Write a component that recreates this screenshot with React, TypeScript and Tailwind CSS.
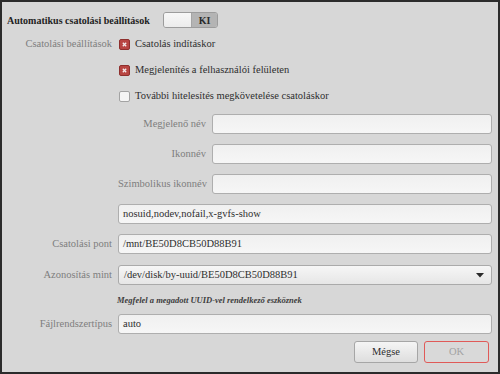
const Checkbox = ({ checked }: { checked: boolean }) =>
  checked ? (
    <span className="flex h-[11px] w-[11px] items-center justify-center rounded-[2px] border border-[#8e2f2d] bg-[#b84542]">
      <svg width="5" height="5" viewBox="0 0 5 5">
        <path d="M0.8 0.8 L4.2 4.2 M4.2 0.8 L0.8 4.2" stroke="#f4eaea" strokeWidth="1.3" />
      </svg>
    </span>
  ) : (
    <span className="h-[11px] w-[11px] rounded-[2px] border border-[#a3a3a3] bg-[#f5f5f5]" />
  );

const Field = ({ value = "" }: { value?: string }) => (
  <div className="flex h-[20px] flex-1 items-center rounded-[3px] border border-[#aeaeae] bg-gradient-to-b from-[#f0f0f0] to-[#f6f6f6] px-[4px] text-[10.5px] text-[#2e2e2e]">
    {value}
  </div>
);

export default function App() {
  return (
    <div className="flex h-[374px] w-[500px] flex-col border-2 border-[#2b2b2b] bg-[#d7d7d7] pt-[10px] font-['Liberation_Serif','Times_New_Roman',serif] text-[#2e2e2e]">
      {/* header */}
      <div className="flex h-[16px] items-center pl-[5px]">
        <span className="w-[156px] text-[10px] font-bold text-[#222]">Automatikus csatolási beállítások</span>
        <div className="flex h-[16px] w-[55px] overflow-hidden rounded-[3px] border border-[#9c9c9c]">
          <div className="w-[27px] bg-gradient-to-b from-[#f7f7f7] to-[#ececec]" />
          <div className="flex flex-1 items-center justify-center border-l border-[#a5a5a5] bg-[#b4b4b4] text-[10px] font-bold text-[#2a2a2a]">
            KI
          </div>
        </div>
      </div>

      {/* checkbox rows */}
      <div className="mt-[8px] flex h-[16px] items-center gap-[6px]">
        <span className="w-[110px] text-right text-[10.5px] text-[#7e7e7e]">Csatolási beállítások</span>
        <div className="ml-[1px] flex items-center gap-[5px]">
          <Checkbox checked />
          <span className="text-[10.5px]">Csatolás indításkor</span>
        </div>
      </div>
      <div className="mt-[10px] flex h-[16px] items-center gap-[6px]">
        <span className="w-[110px]" />
        <div className="ml-[1px] flex items-center gap-[5px]">
          <Checkbox checked />
          <span className="text-[10.5px]">Megjelenítés a felhasználói felületen</span>
        </div>
      </div>
      <div className="mt-[10px] flex h-[16px] items-center gap-[6px]">
        <span className="w-[110px]" />
        <div className="ml-[1px] flex items-center gap-[5px]">
          <Checkbox checked={false} />
          <span className="text-[10.5px]">További hitelesítés megkövetelése csatoláskor</span>
        </div>
      </div>

      {/* nested fields */}
      <div className="mt-[10px] flex flex-col gap-[10px] pl-[116px] pr-[6px]">
        {["Megjelenő név", "Ikonnév", "Szimbolikus ikonnév"].map((l) => (
          <div key={l} className="flex items-center gap-[6px]">
            <span className="w-[88px] whitespace-nowrap text-right text-[10.5px] text-[#7e7e7e]">{l}</span>
            <Field />
          </div>
        ))}
        <div className="flex">
          <Field value="nosuid,nodev,nofail,x-gvfs-show" />
        </div>
      </div>

      <div className="mt-[10px] flex items-center gap-[6px] pr-[6px]">
        <span className="w-[110px] text-right text-[10.5px] text-[#7e7e7e]">Csatolási pont</span>
        <Field value="/mnt/BE50D8CB50D88B91" />
      </div>

      <div className="mt-[11px] flex items-center gap-[6px] pr-[6px]">
        <span className="w-[110px] text-right text-[10.5px] text-[#7e7e7e]">Azonosítás mint</span>
        <div className="flex h-[20px] flex-1 items-center justify-between rounded-[3px] border border-[#aaaaaa] bg-gradient-to-b from-[#f6f6f6] to-[#e6e6e6] pl-[5px] pr-[7px] text-[10.5px] text-[#2e2e2e]">
          <span>/dev/disk/by-uuid/BE50D8CB50D88B91</span>
          <svg width="8" height="5" viewBox="0 0 8 5">
            <path d="M0 0 H8 L4 4.5 Z" fill="#2a2a2a" />
          </svg>
        </div>
      </div>

      <div className="mt-[7px] flex h-[16px] items-center pl-[115px]">
        <span className="text-[8.5px] font-semibold italic text-[#3c3c3c]">
          Megfelel a megadott UUID-vel rendelkező eszköznek
        </span>
      </div>

      <div className="mt-[6px] flex items-center gap-[6px] pr-[6px]">
        <span className="w-[110px] text-right text-[10.5px] text-[#7e7e7e]">Fájlrendszertípus</span>
        <Field value="auto" />
      </div>

      {/* buttons */}
      <div className="mt-[7px] flex justify-end gap-[6px] pr-[9px]">
        <div className="flex h-[22px] w-[64px] items-center justify-center rounded-[3px] border border-[#a6a6a6] bg-gradient-to-b from-[#f5f5f5] to-[#dedede] text-[10.5px] text-[#2e2e2e]">
          Mégse
        </div>
        <div className="flex h-[22px] w-[65px] items-center justify-center rounded-[3px] border border-[#e05a58] bg-[#d9d9d9] text-[10.5px] text-[#a3a3a3]">
          OK
        </div>
      </div>
    </div>
  );
}
